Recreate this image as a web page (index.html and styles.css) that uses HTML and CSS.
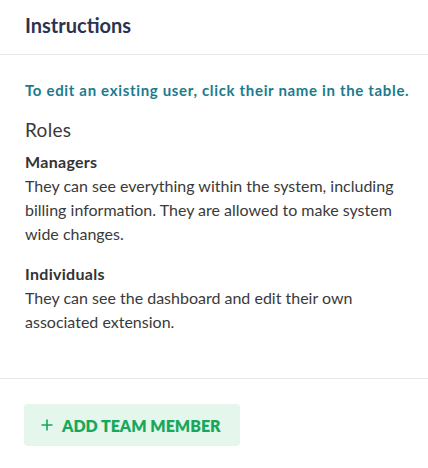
FILE: index.html
```html
<!DOCTYPE html>
<html>
<head>
<meta charset="utf-8">
<link rel="stylesheet" href="styles.css">
</head>
<body>
<div class="panel">
  <div class="panel-header">
    <h2 class="panel-title">Instructions</h2>
  </div>
  <div class="panel-body">
    <p class="hint">To edit an existing user, click their name in the table.</p>
    <h3 class="roles-title">Roles</h3>
    <div class="role">
      <div class="role-name">Managers</div>
      <p class="role-desc">They can see everything within the system, including billing information. They are allowed to make system wide changes.</p>
    </div>
    <div class="role">
      <div class="role-name">Individuals</div>
      <p class="role-desc">They can see the dashboard and edit their own associated extension.</p>
    </div>
  </div>
  <div class="panel-footer">
    <button class="add-btn" type="button">
      <svg class="plus" width="12" height="12" viewBox="0 0 12 12"><path d="M6 0.5v11M0.5 6h11" stroke="currentColor" stroke-width="1.6" fill="none"/></svg>
      <span>ADD TEAM MEMBER</span>
    </button>
  </div>
</div>
</body>
</html>
```
FILE: styles.css
```css
* { box-sizing: border-box; }
html, body { margin: 0; padding: 0; background: #fff; }
body { font-family: Lato, "Noto Sans", sans-serif; color: #3a3a3a; }
.panel { width: 428px; }
.panel-header {
  height: 55px;
  padding: 0 25px;
  display: flex;
  align-items: center;
  border-bottom: 1px solid #e6e6e6;
}
.panel-title {
  margin: 0;
  font-size: 20px;
  line-height: 24px;
  font-weight: 700;
  color: #2b3352;
  padding-bottom: 4px;
}
.panel-body {
  padding: 25px 25px 44px;
  border-bottom: 1px solid #e6e6ec;
}
.hint {
  margin: 0;
  font-size: 15px;
  font-weight: 700;
  color: #1b7b8e;
  line-height: 20px;
  letter-spacing: 0.67px;
  white-space: nowrap;
}
.roles-title {
  margin: 17px 0 0;
  font-size: 19px;
  font-weight: 400;
  color: #3a3a3a;
  line-height: 26px;
  letter-spacing: 0.3px;
}
.role { margin-top: 8px; }
.role + .role { margin-top: 17px; }
.role-name {
  font-size: 16px;
  font-weight: 700;
  color: #333;
  line-height: 22px;
  letter-spacing: 0.3px;
}
.role-desc {
  margin: 1px 0 0;
  font-size: 16px;
  line-height: 24px;
  color: #3a3a3a;
}
.panel-footer { padding: 25px 24px; }
.add-btn {
  display: inline-flex;
  align-items: center;
  gap: 9px;
  height: 42px;
  padding: 0 17px;
  width: 216px;
  border: 0;
  border-radius: 4px;
  background: #e5f6ec;
  color: #17a85c;
  font-family: Lato, "Noto Sans", sans-serif;
  font-size: 16px;
  font-weight: 800;
  letter-spacing: 0;
}
.plus { flex: none; }
```
